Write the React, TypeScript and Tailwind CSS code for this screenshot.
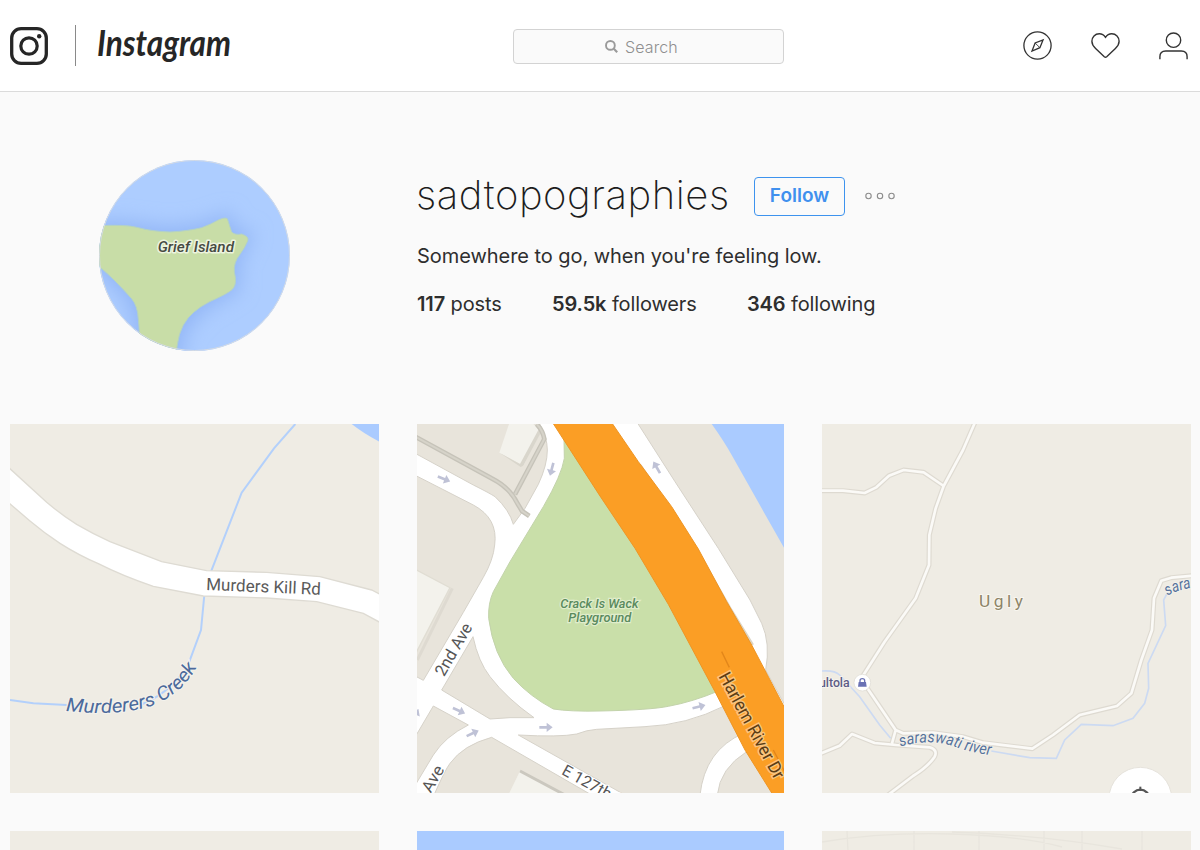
const LAND = "#efece4";
const WATER = "#aacbff";

const Logo = () => (
  <svg className="h-[38px] w-[38px]" viewBox="0 0 38 38" fill="none" stroke="#262626">
    <rect x="1.7" y="1.7" width="34.6" height="34.6" rx="9.4" strokeWidth="3.3" />
    <circle cx="19" cy="19" r="8.2" strokeWidth="3.2" />
    <circle cx="29.2" cy="9.2" r="2.2" fill="#262626" stroke="none" />
  </svg>
);

const Wordmark = () => (
  <svg className="h-[52px] w-[142px]" viewBox="0 0 142 52">
    <text
      x="1"
      y="36"
      fontFamily="Lato, sans-serif"
      fontStyle="italic"
      fontWeight="700"
      fontSize="36"
      fill="#262626"
      textLength="134"
      lengthAdjust="spacingAndGlyphs"
    >
      Instagram
    </text>
  </svg>
);

const Header = () => (
  <header className="flex h-[92px] items-center border-b border-[#dbdbdb] bg-white pr-3 pl-2.5">
    <div className="flex w-[503px] items-center">
      <Logo />
      <div className="ml-[27px] h-[41px] w-px bg-[#8a8a8a]" />
      <div className="ml-5">
        <Wordmark />
      </div>
    </div>
    <div className="mt-0.5 flex h-[35px] w-[271px] items-center justify-center gap-[7px] rounded-[4px] border border-[#d3d3d3] bg-[#fafafa] pr-[14px]">
      <svg className="h-[13px] w-[13px]" viewBox="0 0 13 13" fill="none" stroke="#9a9a9a">
        <circle cx="5.4" cy="5.4" r="4.4" strokeWidth="1.9" />
        <path d="M8.8 8.8l3.4 3.4" strokeWidth="2.2" />
      </svg>
      <span className="text-[16px] leading-5 font-light tracking-[0.1px] text-[#8f8f8f]">Search</span>
    </div>
    <nav className="ml-auto flex items-center gap-[39px]">
      <svg className="h-[29px] w-[29px]" viewBox="0 0 29 29" fill="none" stroke="#333" strokeWidth="1.3">
        <circle cx="14.5" cy="14.5" r="13.6" />
        <path d="M20.1 8.8l-3.2 7.9-7.9 3.3 3.1-8z" />
        <path d="M12.1 12l4.8 4.7" strokeWidth="0.9" />
      </svg>
      <svg className="h-[29px] w-[29px]" viewBox="0 0 29 29" fill="none" stroke="#333" strokeWidth="1.4">
        <path d="M14.5 6.3C12.9 3.9 11 2.8 8.3 2.8 4 2.8.9 6 .9 10.3c0 2.9 1.3 4.9 3.7 7.2l8.7 8.3c.8.7 1.6.7 2.4 0l8.7-8.3c2.4-2.3 3.7-4.3 3.7-7.2 0-4.3-3.1-7.5-7.4-7.5-2.7 0-4.6 1.1-6.2 3.5z" />
      </svg>
      <svg className="h-[29px] w-[29px]" viewBox="0 0 29 29" fill="none" stroke="#333" strokeWidth="1.4">
        <circle cx="14.5" cy="9.2" r="7.2" />
        <path d="M.9 28.2v-2.4c0-3.6 2.4-5.8 5.8-5.8h15.6c3.4 0 5.8 2.2 5.8 5.8v2.4" />
      </svg>
    </nav>
  </header>
);

const Avatar = () => (
  <svg className="mt-[0.5px] h-[191px] w-[191px] rounded-full" viewBox="42 42 573 573">
    <defs>
      <filter id="shore" x="-20%" y="-20%" width="140%" height="140%">
        <feGaussianBlur stdDeviation="27" />
      </filter>
    </defs>
    <rect x="42" y="42" width="573" height="573" fill="#adcdff" />
    <path
      d="M0 240L110 238L255 256L350 244L425 218L440 258L485 270L450 350L448 425L350 485L290 550L275 640H163V540L140 460L40 355z"
      fill="#8fb3f5"
      stroke="#99bbf8"
      strokeWidth="40"
      filter="url(#shore)"
    />
    <path
      d="M30 240Q120 234 160 245T255 258Q310 255 350 245Q380 234 400 222Q420 213 427 218Q434 240 440 258Q450 268 470 264Q494 272 488 285Q480 305 465 325Q445 350 448 378Q456 410 446 425Q440 436 400 455Q340 480 310 515Q275 555 273 640H163Q165 560 160 520Q158 480 140 458Q90 400 30 350z"
      fill="#c8dda7"
      stroke="#b4d2c4"
      strokeWidth="3"
    />
    <text
      x="218"
      y="319"
      fontFamily="Roboto, sans-serif"
      fontStyle="italic"
      fontWeight="500"
      fontSize="45"
      fill="#464a42"
      stroke="#edf4df"
      strokeWidth="9"
      strokeLinejoin="round"
      paintOrder="stroke"
      textLength="229"
      lengthAdjust="spacingAndGlyphs"
    >
      Grief Island
    </text>
    <circle cx="328.5" cy="328.5" r="285" fill="none" stroke="#d5dbe3" strokeWidth="3" />
  </svg>
);

const Profile = () => (
  <section className="flex h-[332px] pt-[67px] pl-[99px]">
    <Avatar />
    <div className="ml-[127px]">
      <div className="mt-[18px] flex h-[39px] items-center">
        <h1 className="-mt-[5px] -ml-px w-[338px] text-[40px] leading-[39px] font-extralight tracking-[0.55px] whitespace-nowrap text-[#1d1d1d]">
          sadtopographies
        </h1>
        <button className="h-[39px] w-[91px] rounded-[4px] border border-[#3d93ee] pb-px text-[19px] leading-5 font-semibold text-[#4090ee]">
          Follow
        </button>
        <svg className="-mt-0.5 ml-5 h-2 w-[30px]" viewBox="0 0 30 8" fill="none" stroke="#8c8c8c" strokeWidth="1.1">
          <circle cx="3.5" cy="4" r="2.7" />
          <circle cx="15" cy="4" r="2.7" />
          <circle cx="26.5" cy="4" r="2.7" />
        </svg>
      </div>
      <p className="mt-7 text-[20px] leading-6 tracking-[-0.05px] whitespace-nowrap text-[#2e2e2e]">
        Somewhere to go, when you're feeling low.
      </p>
      <ul className="mt-6 flex text-[20px] leading-6 tracking-[-0.12px] whitespace-nowrap text-[#2e2e2e]">
        <li className="w-[135px]">
          <span className="font-semibold">117</span> posts
        </li>
        <li className="w-[195px]">
          <span className="font-semibold">59.5k</span> followers
        </li>
        <li>
          <span className="font-semibold">346</span> following
        </li>
      </ul>
    </div>
  </section>
);

const CreekMap = () => (
  <svg className="block h-[369px] w-full" preserveAspectRatio="none" viewBox="30 27 1107 1107" fontFamily="Roboto, sans-serif">
    <rect x="30" y="27" width="1107" height="1107" fill={LAND} />
    <path d="M1055 27Q1090 55 1140 81V27z" fill={WATER} />
    <path d="M886 27L822 100L725 233L633 470M613 540L603 645L568 740" fill="none" stroke="#b3d0fb" strokeWidth="6" />
    <path d="M30 855L100 865L200 870M420 870Q500 840 560 760" fill="none" stroke="#b3d0fb" strokeWidth="6" />
    <path
      d="M20 152L140 262Q185 300 230 328Q280 357 330 380L485 440L620 467L800 472L960 485L1115 525L1145 540V625L1090 595L950 560L800 549L610 543L460 514Q370 484 295 446Q235 420 180 385Q130 352 90 318L20 258z"
      fill="#fff"
      stroke="#dedbd3"
      strokeWidth="4"
    />
    <text x="618" y="525" transform="rotate(2.4 618 525)" fontSize="51" fill="#5a5a5a" textLength="344">
      Murders Kill Rd
    </text>
    <path id="creek" d="M197 888Q350 905 455 873Q550 835 592 752" fill="none" />
    <text
      fontSize="57"
      fontStyle="italic"
      fill="#4c6a9b"
      stroke="#f4f3ee"
      strokeWidth="6"
      paintOrder="stroke"
    >
      <textPath href="#creek" textLength="444" lengthAdjust="spacingAndGlyphs">
        Murderers Creek
      </textPath>
    </text>
  </svg>
);

const arrows = [
  { x: 102, y: 192, angle: 22 },
  { x: 425, y: 163, angle: 105 },
  { x: 740, y: 157, angle: -120 },
  { x: 147, y: 887, angle: 24 },
  { x: 188, y: 955, angle: -25 },
  { x: 408, y: 937, angle: 0 },
  { x: 867, y: 875, angle: -14 },
  { x: 16, y: 900, angle: -62 },
];

const PlaygroundMap = () => (
  <svg className="block h-[369px] w-full" preserveAspectRatio="none" viewBox="21 27 1101 1107" fontFamily="Roboto, sans-serif">
    <rect x="19" y="27" width="1105" height="1107" fill="#fff" />
    <g fill="#e8e4db" stroke="#d6d2c9" strokeWidth="3">
      <path d="M10 20H385Q412 65 412 105Q412 150 385 208L345 280L310 328Q298 285 255 245Q240 235 190 210L10 112z" />
      <path d="M10 178L190 270Q265 310 254 390Q250 435 220 487L160 592L40 796L10 780z" />
      <path d="M189 665Q205 740 240 785Q290 850 372 908L300 908L240 912L95 825z" />
      <path d="M70 873L175 930Q105 965 70 1020L10 1120V975z" />
      <path d="M72 1140Q105 1065 120 1045Q160 990 245 967L545 1140z" />
      <path d="M325 960Q450 967 500 957Q530 945 560 943L705 935Q830 930 945 872L1000 955Q885 1005 870 1140H645z" />
      <path d="M1010 1010Q930 1060 922 1140H1100z" />
      <path d="M680 20L795 200L925 400L1020 555L1055 625Q1082 685 1067 765L1130 880V20z" />
    </g>
    <path d="M900 20Q940 75 965 120L1055 280L1130 412V20z" fill={WATER} />

    {/* buildings */}
    <path d="M297 27H370L392 50L340 152L268 113z" fill="#f3f2ec" />
    <path d="M374 27L395 48L340 152L332 156L268 113L330 147L385 45z" fill="#d9d6cc" />
    <path d="M19 465L120 518L19 712z" fill="#f3f2ec" stroke="#e0ddd3" strokeWidth="4" />
    <path d="M127 520L22 735" stroke="#dedad1" strokeWidth="9" fill="none" />
    <path d="M330 1068L295 1140H465z" fill="#f3f2ec" />
    <path d="M330 1068L465 1140" stroke="#cbc8bf" strokeWidth="9" fill="none" />

    {/* footpaths */}
    <g fill="none" stroke="#c6c3b9" strokeWidth="14">
      <path d="M10 62L245 190Q300 218 322 265L336 288L358 303" />
      <path d="M315 238L403 72Q398 45 380 27" />
    </g>
    <g fill="none" stroke="#d6d3c9" strokeWidth="6">
      <path d="M10 62L245 190Q300 218 322 265L336 288L358 303" />
      <path d="M315 238L403 72Q398 45 380 27" />
    </g>

    <path
      d="M462 70L463 130Q455 180 400 275L300 440L250 530Q234 565 236 610Q250 720 310 790Q360 845 430 882Q480 890 570 888Q720 885 775 874Q850 860 925 828L960 700L560 160z"
      fill="#c9dfa9"
      stroke="#c3d3ab"
      strokeWidth="3"
    />
    <path d="M690 150L785 290L865 415L960 580L1028 690" stroke="#ddd5c5" strokeWidth="9" fill="none" />
    <path
      d="M426 20L570 243L675 400L775 568L915 830L1005 1005L1089 1140H1130V890L1025 690L950 560L865 402L785 275L685 140L603 20z"
      fill="#fb9e25"
      stroke="#ee9524"
      strokeWidth="3"
    />
    <path d="M935 710L958 757M1090 1005L1124 1070" stroke="#e2861a" strokeWidth="4" />

    {arrows.map((a) => (
      <path
        key={`${a.x}-${a.y}`}
        d="M-20 -4H2V-14L20 0L2 14V4H-20z"
        transform={`translate(${a.x} ${a.y}) rotate(${a.angle})`}
        fill="#bfc2d6"
      />
    ))}

    <g
      fontStyle="italic"
      fontWeight="500"
      fontSize="38"
      fill="#5a8a5e"
      stroke="#e0edcc"
      strokeWidth="7"
      paintOrder="stroke"
    >
      <text x="451" y="578" textLength="234" lengthAdjust="spacingAndGlyphs">
        Crack Is Wack
      </text>
      <text x="475" y="622" textLength="189" lengthAdjust="spacingAndGlyphs">
        Playground
      </text>
    </g>
    <g fontSize="50" fill="#555" stroke="#fff" strokeWidth="6" paintOrder="stroke">
      <text transform="translate(102 787) rotate(-60)" textLength="173" lengthAdjust="spacingAndGlyphs">
        2nd Ave
      </text>
      <text transform="translate(62 1136) rotate(-60)" textLength="84" lengthAdjust="spacingAndGlyphs">
        Ave
      </text>
      <text transform="translate(452 1076) rotate(29)" fontSize="48">
        E 127th St
      </text>
    </g>
    <text
      transform="translate(925 784) rotate(61.5)"
      fontSize="53"
      fill="#5c3d14"
      stroke="#fbc47c"
      strokeWidth="9"
      paintOrder="stroke"
      textLength="355"
      lengthAdjust="spacingAndGlyphs"
    >
      Harlem River Dr
    </text>
  </svg>
);

const uglyRoads =
  "M497 20L460 105L402 213L378 280L359 360L358 450L318 550L225 680L158 785L170 815L258 945L247 985M402 213L342 172L282 165L238 182L200 217L165 234L100 227L30 227M258 945L280 955L370 953L460 965L520 983L668 1001L730 960L810 900L922 873L965 835L995 735L1027 645L1033 550L1055 497L1085 488L1150 482M30 1017L90 992L127 957L195 984L260 990L360 997Q385 1005 375 1025Q355 1055 310 1083L235 1140";

const UglyMap = () => (
  <svg className="block h-[369px] w-full" preserveAspectRatio="none" viewBox="37 27 1107 1107" fontFamily="Roboto, sans-serif">
    <rect x="37" y="27" width="1107" height="1107" fill={LAND} />
    <path
      d="M37 768Q75 765 90 780L150 845L210 930L243 970M545 1008L660 1028L740 1030L765 975L815 928L910 932L970 910L1005 865L1017 820L1015 745L1068 632L1062 555L1075 530"
      fill="none"
      stroke="#ccdaf2"
      strokeWidth="5"
    />
    <path d={uglyRoads} fill="none" stroke="#dedad1" strokeWidth="15" strokeLinejoin="round" />
    <path d={uglyRoads} fill="none" stroke="#fbfaf7" strokeWidth="8" strokeLinejoin="round" />
    <text x="508" y="577" fontSize="52" fill="#8d8468" stroke="#f8f6ef" strokeWidth="6" paintOrder="stroke" textLength="132">
      Ugly
    </text>
    <path id="saraswati" d="M272 995Q350 972 420 990Q485 1015 560 1022" fill="none" />
    <path id="sara" d="M1074 543Q1092 525 1190 510" fill="none" />
    <g fontSize="48" fontStyle="italic" fill="#56739c" stroke="#f4f2ec" strokeWidth="5" paintOrder="stroke">
      <text>
        <textPath href="#saraswati" textLength="277" lengthAdjust="spacingAndGlyphs">
          saraswati river
        </textPath>
      </text>
      <text>
        <textPath href="#sara" textLength="76" lengthAdjust="spacingAndGlyphs">
          sara
        </textPath>
      </text>
    </g>
    <text x="120" y="815" fontSize="37" fontWeight="500" textAnchor="end" fill="#5d5b85" stroke="#f7f5f0" strokeWidth="5" paintOrder="stroke">
      ultola
    </text>
    <circle cx="158" cy="803" r="25" fill="#fff" stroke="#dcd9d2" strokeWidth="2" />
    <path d="M147 801H169L171 815H145z" fill="#6a72b5" />
    <path d="M151 802V797Q151 791 158 791T165 797V802" fill="none" stroke="#6a72b5" strokeWidth="4" />
    <circle cx="992" cy="1151" r="94" fill="#fff" stroke="#e6e3dc" strokeWidth="3" />
    <circle cx="992" cy="1151" r="27" fill="none" stroke="#555" strokeWidth="7" />
    <path d="M992 1115V1128" stroke="#555" strokeWidth="6" />
  </svg>
);

const StreetsMap = () => (
  <svg className="block h-[369px] w-full" viewBox="0 0 369 369">
    <rect width="369" height="369" fill={LAND} />
    <g fill="none" stroke="#e8e5dd" strokeWidth="1.3">
      <path d="M0 11Q60 1 130 3T240 16M130 1Q220 4 300 18M25 0L28 60M92 0V60M157 0V60M222 0V60M260 0V60M320 0V60" />
    </g>
  </svg>
);

const App = () => {
  return (
    <div className="h-[850px] w-[1200px] overflow-hidden bg-[#fafafa] font-[Inter,sans-serif]">
      <Header />
      <main>
        <Profile />
        <div className="ml-2.5 grid w-[1181px] grid-cols-[369px_367px_369px] gap-[38px]">
          <CreekMap />
          <PlaygroundMap />
          <UglyMap />
          <div className="h-[369px] bg-[#efece4]" />
          <div className="h-[369px] bg-[#aacbff]" />
          <StreetsMap />
        </div>
      </main>
    </div>
  );
};

export default App;
